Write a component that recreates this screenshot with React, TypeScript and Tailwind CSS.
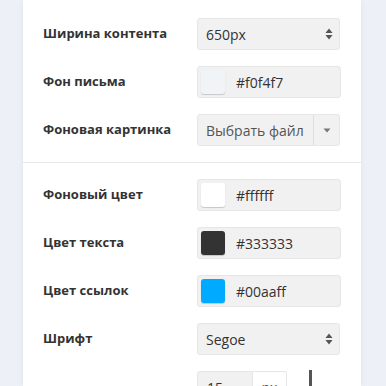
import React from "react";

const font = { fontFamily: '"Open Sans", "Liberation Sans", sans-serif' };

function SelectArrows() {
  return (
    <svg width="8" height="12" viewBox="0 0 8 12" className="shrink-0">
      <path d="M4 0.5 L7.5 5 L0.5 5 Z" fill="#555" />
      <path d="M4 11.5 L7.5 7 L0.5 7 Z" fill="#555" />
    </svg>
  );
}

function Row({ label, children }: { label: string; children: React.ReactNode }) {
  return (
    <div className="flex h-8 items-center">
      <div className="w-[154px] text-[13px] font-bold text-[#333]">{label}</div>
      {children}
    </div>
  );
}

function SelectBox({ value }: { value: string }) {
  return (
    <div className="flex h-8 w-[143px] items-center justify-between rounded-[3px] border border-[#e6e6e6] bg-[#f1f1f1] pl-[8px] pr-[6px] text-[14px] text-[#333]">
      <span>{value}</span>
      <SelectArrows />
    </div>
  );
}

function ColorBox({ color }: { color: string }) {
  return (
    <div className="flex h-8 w-[144px] items-center rounded-[3px] border border-[#e6e6e6] bg-[#f1f1f1] pl-[3px] text-[14px] text-[#333]">
      <span
        className="h-6 w-6 rounded-[3px] shadow-[0_1px_1px_rgba(0,0,0,0.18)]"
        style={{ backgroundColor: color }}
      />
      <span className="ml-[11px]">{color}</span>
    </div>
  );
}

export default function App() {
  return (
    <div className="flex h-[386px] overflow-hidden bg-[#edf1f7]" style={font}>
      <div className="ml-[23px] w-[338px] bg-white pl-5 shadow-[0_0_6px_rgba(120,140,170,0.12)]">
        <div className="flex flex-col gap-4 pb-4 pt-[18px]">
          <Row label="Ширина контента">
            <SelectBox value="650px" />
          </Row>
          <Row label="Фон письма">
            <ColorBox color="#f0f4f7" />
          </Row>
          <Row label="Фоновая картинка">
            <div className="flex h-8 w-[143px] items-stretch overflow-hidden rounded-[3px] border border-[#e6e6e6] bg-[#f1f1f1] text-[14px] text-[#555]">
              <span className="flex w-[115px] items-center pl-[8px]">Выбрать файл</span>
              <span className="flex flex-1 items-center justify-center border-l border-[#dedede]">
                <svg width="8" height="5" viewBox="0 0 8 5">
                  <path d="M0.5 0.5 L7.5 0.5 L4 4.5 Z" fill="#777" />
                </svg>
              </span>
            </div>
          </Row>
        </div>
        <div className="-ml-5 border-t border-[#e8e8e8]" />
        <div className="flex flex-col gap-4 pt-4">
          <Row label="Фоновый цвет">
            <ColorBox color="#ffffff" />
          </Row>
          <Row label="Цвет текста">
            <ColorBox color="#333333" />
          </Row>
          <Row label="Цвет ссылок">
            <ColorBox color="#00aaff" />
          </Row>
          <Row label="Шрифт">
            <SelectBox value="Segoe" />
          </Row>
          <div className="flex h-8 items-start">
            <div className="w-[154px]" />
            <div className="flex h-8 items-stretch text-[14px] text-[#333]">
              <span className="flex w-[56px] items-center rounded-l-[3px] border border-[#e6e6e6] bg-[#f1f1f1] pl-[9px]">15</span>
              <span className="flex w-[34px] items-center justify-center rounded-r-[3px] border border-l-0 border-[#e6e6e6] bg-white text-[#555]">px</span>
            </div>
            <div className="ml-[22px] mt-[-1px] h-9 w-[3px] bg-[#555]" />
          </div>
        </div>
      </div>
    </div>
  );
}
